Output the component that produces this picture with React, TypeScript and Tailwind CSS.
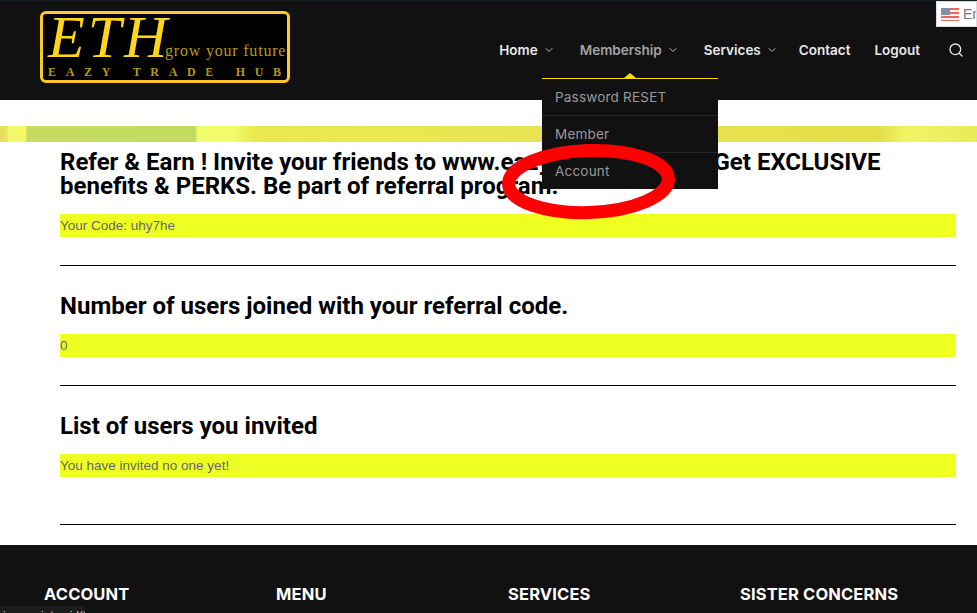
import React from 'react';
import { ChevronDown, Search } from 'lucide-react';

const navItems = [
  { label: 'Home', caret: true, tone: 'text-[#e8e8e8]', gap: 'mr-[25px]' },
  { label: 'Membership', caret: true, tone: 'text-[#a3a3a3]', gap: 'mr-[25px]' },
  { label: 'Services', caret: true, tone: 'text-[#e8e8e8]', gap: 'mr-[21px]' },
  { label: 'Contact', caret: false, tone: 'text-[#e8e8e8]', gap: 'mr-[24px]' },
  { label: 'Logout', caret: false, tone: 'text-[#e8e8e8]', gap: 'mr-[25px]' },
];

const Logo = () => (
  <div className="w-[250px] h-[72px] bg-black border-[3px] border-[#fec926] rounded-[6px] flex flex-col pl-[5px] pr-[3px] overflow-hidden">
    <div className="flex items-end h-[48px]">
      <span className="w-[117px] shrink-0 font-['Liberation_Serif',serif] italic text-[60px] leading-[50px] tracking-[3px] text-[#fdd61c] whitespace-nowrap">ETH</span>
      <span className="font-['Liberation_Serif',serif] text-[16px] leading-[20px] tracking-[0.8px] text-[#b69a12] ml-auto whitespace-nowrap pb-[1px]">grow your future</span>
    </div>
    <div className="flex justify-between font-['Liberation_Serif',serif] font-bold text-[12px] leading-[14px] mt-[3px] pr-[3px] text-[#b69a12]">
      {'EAZY TRADE HUB'.split('').map((c, i) => (
        <span key={i}>{c === ' ' ? '\u00a0' : c}</span>
      ))}
    </div>
  </div>
);

const Header = () => (
  <header className="h-[100px] bg-[#111111] border-t border-[#141a22] flex items-start justify-between pl-[40px] pr-[13px]">
    <div className="pt-[10px]">
      <Logo />
    </div>
    <nav className="flex items-center h-[100px] pb-[2px] font-['Inter',sans-serif] font-semibold text-[13.5px]">
      {navItems.map((item) => (
        <a
          key={item.label}
          className={`flex items-center ${item.gap} ${item.tone}`}
        >
          {item.label}
          {item.caret && <ChevronDown size={12} className="ml-[5px] text-[#bdbdbd]" />}
        </a>
      ))}
      <Search size={16} className="text-[#e8e8e8] ml-[3px]" />
    </nav>
  </header>
);

const DropdownMenu = () => (
  <div className="absolute left-[542px] top-[73px] w-[176px]">
    <div className="mx-auto w-0 h-0 border-x-[6px] border-x-transparent border-b-[5px] border-b-[#ffd800]" />
    <ul className="bg-[#111111] border-t border-[#ffd800] font-['Inter',sans-serif] text-[13.5px] tracking-[0.2px] text-[#9a9a9a]">
      <li className="h-[37px] pl-[13px] pt-[1px] flex items-center border-b border-[#262626]">Password RESET</li>
      <li className="h-[37px] pl-[13px] pt-[1px] flex items-center border-b border-[#262626]">Member</li>
      <li className="h-[36px] pl-[13px] pt-[1px] flex items-center">Account</li>
    </ul>
  </div>
);

const Section = ({ title, value, tail }: { title: string; value: string; tail: string }) => (
  <section>
    <h2 className="font-['Roboto',sans-serif] font-bold text-[24px] leading-[24px] text-black">{title}</h2>
    <div className="mt-[16px] h-[23px] bg-[#eeff22] font-['Liberation_Sans',sans-serif] text-[13.5px] leading-[23px] text-[#666666]">
      {value}
    </div>
    <hr className={`border-black ${tail}`} />
  </section>
);

export default function App() {
  return (
    <div className="relative h-[613px] overflow-hidden bg-white">
      <Header />

      <div className="mt-[26px] h-[16px] bg-[linear-gradient(90deg,#e6dd5c_0%,#e9e45c_0.7%,#f4f96a_0.9%,#f4f96a_2.6%,#c6dc60_2.8%,#c2dc60_20%,#f2fb6a_20.2%,#f2fb6a_24%,#ebe94f_26%,#e9e552_55%,#e6e14c_75%,#e5e04a_90%,#f0f566_93%,#e9ea58_100%)]" />

      <main className="ml-[60px] mr-[21px] pt-[8px] flex flex-col gap-[28px]">
        <Section
          title="Refer & Earn ! Invite your friends to www.eazytradehub.com. Get EXCLUSIVE benefits & PERKS. Be part of referral program."
          value="Your Code: uhy7he"
          tail="mt-[28px]"
        />
        <Section title="Number of users joined with your referral code." value="0" tail="mt-[28px]" />
        <Section title="List of users you invited" value="You have invited no one yet!" tail="mt-[47px]" />
      </main>

      <footer className="mt-[20px] h-[100px] bg-[#111111] pt-[39px] pl-[44px] grid grid-cols-[232px_232px_232px_1fr] font-['Inter',sans-serif] font-bold text-[16.5px] tracking-[0.15px] leading-[20px] text-white">
        <h3>ACCOUNT</h3>
        <h3>MENU</h3>
        <h3>SERVICES</h3>
        <h3>SISTER CONCERNS</h3>
      </footer>

      <DropdownMenu />

      {/* red marker ring drawn over the screenshot */}
      <svg className="absolute left-[498px] top-[140px]" width="182" height="84" viewBox="0 0 182 84">
        <ellipse cx="90.5" cy="41.5" rx="80" ry="31" fill="none" stroke="#ff0000" strokeWidth="13" transform="rotate(-2 91 42)" />
      </svg>

      {/* language switcher */}
      <div className="absolute right-0 top-[1px] w-[41px] h-[26px] bg-white border border-[#dddddd] flex items-center pl-[4px] overflow-hidden font-['Liberation_Sans',sans-serif] text-[14px] text-[#777777]">
        <svg width="18" height="13" viewBox="0 0 18 13" className="shrink-0">
          <rect width="18" height="13" fill="#f3f3f3" />
          <rect y="0" width="18" height="2" fill="#e8675f" />
          <rect y="4" width="18" height="2" fill="#e8675f" />
          <rect y="8" width="18" height="2" fill="#e8675f" />
          <rect y="12" width="18" height="1" fill="#e8675f" />
          <rect width="9" height="7" fill="#7f8fa8" />
        </svg>
        <span className="ml-[4px] whitespace-nowrap">English</span>
      </div>

      {/* browser status tooltip, cut off by the window */}
      <div className="absolute left-0 top-[606px] w-[85px] h-[7px] overflow-hidden bg-[#1c1c1c] rounded-tr-[3px] pl-[3px] pt-[3px] font-['Liberation_Sans',sans-serif] text-[12px] leading-[14px] text-[#cfcfcf] whitespace-nowrap">
        javascript:void(0)
      </div>
    </div>
  );
}
